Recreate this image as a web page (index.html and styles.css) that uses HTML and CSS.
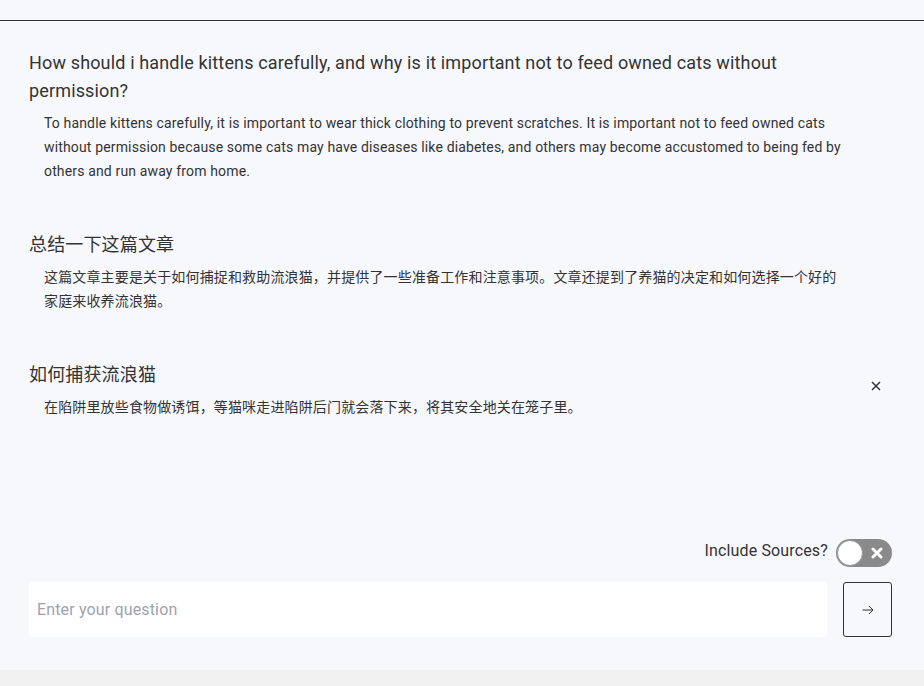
FILE: index.html
```html
<!DOCTYPE html>
<html lang="en">
<head>
<meta charset="utf-8">
<title>Chat</title>
<link rel="stylesheet" href="styles.css">
</head>
<body>
<div class="app">
  <header class="topbar"></header>
  <main class="history">
    <section class="qa">
      <div class="qa-content">
        <h2 class="question">How should i handle kittens carefully, and why is it important not to feed owned cats without permission?</h2>
        <p class="answer">To handle kittens carefully, it is important to wear thick clothing to prevent scratches. It is important not to feed owned cats without permission because some cats may have diseases like diabetes, and others may become accustomed to being fed by others and run away from home.</p>
      </div>
      <div class="qa-side"></div>
    </section>
    <section class="qa">
      <div class="qa-content">
        <h2 class="question">总结一下这篇文章</h2>
        <p class="answer">这篇文章主要是关于如何捕捉和救助流浪猫，并提供了一些准备工作和注意事项。文章还提到了养猫的决定和如何选择一个好的家庭来收养流浪猫。</p>
      </div>
      <div class="qa-side"></div>
    </section>
    <section class="qa">
      <div class="qa-content">
        <h2 class="question">如何捕获流浪猫</h2>
        <p class="answer">在陷阱里放些食物做诱饵，等猫咪走进陷阱后门就会落下来，将其安全地关在笼子里。</p>
      </div>
      <div class="qa-side">
        <button class="close" type="button" aria-label="Remove">
          <svg width="10" height="10" viewBox="0 0 10 10"><path d="M1 1L9 9M9 1L1 9" stroke="#333" stroke-width="1.5" fill="none"/></svg>
        </button>
      </div>
    </section>
  </main>
  <footer class="composer">
    <div class="sources">
      <span class="sources-label">Include Sources?</span>
      <span class="toggle">
        <span class="knob"></span>
        <svg class="toggle-x" width="12" height="12" viewBox="0 0 12 12"><path d="M2 2L10 10M10 2L2 10" stroke="#fff" stroke-width="3" stroke-linecap="round" fill="none"/></svg>
      </span>
    </div>
    <div class="ask">
      <input class="ask-input" type="text" placeholder="Enter your question">
      <button class="send" type="button" aria-label="Send">
        <svg width="12" height="10" viewBox="0 0 12 10"><path d="M0.5 5H11M7 1L11 5L7 9" stroke="#333" stroke-width="1" fill="none"/></svg>
      </button>
    </div>
  </footer>
</div>
</body>
</html>
```

FILE: styles.css
```css
* { box-sizing: border-box; }
html, body { margin: 0; padding: 0; }
body {
  background: #f0f0f0;
  font-family: Roboto, "Noto Sans CJK SC", sans-serif;
  color: #333;
  letter-spacing: 0.15px;
}
.app {
  height: 670px;
  background: #f7f8fc;
  display: flex;
  flex-direction: column;
}
.topbar {
  height: 21px;
  flex: none;
  border-bottom: 1px solid #333;
}
.history {
  flex: 1;
  padding: 28px 32px 0 29px;
  display: flex;
  flex-direction: column;
  gap: 48px;
}
.qa {
  display: flex;
  align-items: center;
}
.qa-content {
  flex: 1;
  min-width: 0;
}
.qa-side {
  width: 31px;
  flex: none;
  display: flex;
  justify-content: center;
}
.question {
  margin: 0;
  font-size: 18px;
  font-weight: 400;
  line-height: 28px;
  color: #333;
}
.answer {
  margin: 6px 0 0;
  padding: 0 15px;
  font-size: 14px;
  line-height: 24px;
  color: #333;
}
.close {
  border: 0;
  background: transparent;
  padding: 0;
  width: 20px;
  height: 20px;
  display: flex;
  align-items: center;
  justify-content: center;
  margin-left: -2px;
  margin-top: -8px;
}
.composer {
  flex: none;
  padding: 0 32px 33px 29px;
  display: flex;
  flex-direction: column;
  gap: 15px;
}
.sources {
  display: flex;
  justify-content: flex-end;
  align-items: center;
  gap: 8px;
  height: 28px;
}
.sources-label {
  font-size: 16px;
  color: #333;
  margin-bottom: 6px;
}
.toggle {
  position: relative;
  width: 56px;
  height: 28px;
  border-radius: 14px;
  background: #8a8a8a;
  display: flex;
  align-items: center;
  justify-content: flex-end;
  padding-right: 9px;
}
.knob {
  position: absolute;
  left: 1px;
  top: 1px;
  width: 26px;
  height: 26px;
  border-radius: 50%;
  background: #fff;
  border: 1px solid #9a9a9a;
}
.ask {
  display: flex;
  gap: 16px;
  height: 55px;
}
.ask-input {
  flex: 1;
  border: 0;
  border-radius: 3px;
  background: #fff;
  padding: 0 8px;
  font-family: Roboto, sans-serif;
  font-size: 16px;
  letter-spacing: 0.15px;
  color: #333;
  outline: none;
}
.ask-input::placeholder { color: #9ea3ad; }
.send {
  width: 49px;
  flex: none;
  border: 1px solid #333;
  border-radius: 3px;
  background: transparent;
  display: flex;
  align-items: center;
  justify-content: center;
  padding: 0;
}
```
